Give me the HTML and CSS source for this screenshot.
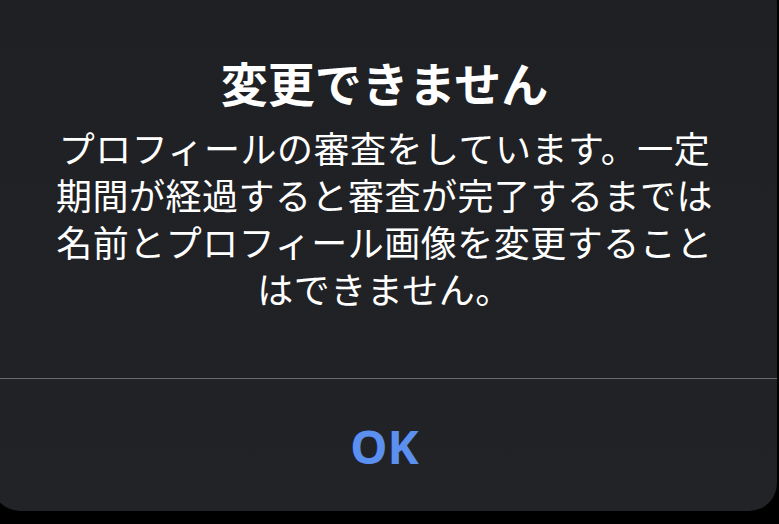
FILE: index.html
```html
<!DOCTYPE html>
<html lang="ja">
<head>
    <meta charset="UTF-8">
    <meta name="viewport" content="width=device-width, initial-scale=1.0">
    <title>変更できません</title>
    <link rel="stylesheet" href="styles.css">
</head>
<body>
    <div class="alert">
        <div class="alert-content">
            <h2 class="alert-title">変更できません</h2>
            <p class="alert-message">
                プロフィールの審査をしています。一定<br>
                期間が経過すると審査が完了するまでは<br>
                名前とプロフィール画像を変更すること<br>
                はできません。
            </p>
        </div>
        <button class="alert-button" type="button">OK</button>
    </div>
</body>
</html>
```

FILE: styles.css
```css
body {
    margin: 0;
    background-color: #000;
    font-family: "Noto Sans CJK JP", "Noto Sans", sans-serif;
    overflow: hidden;
}
.alert {
    width: 785px;
    margin: -24px 0 0 -8px;
    background: linear-gradient(#1e2024, #212326);
    border-radius: 28px;
    overflow: hidden;
}
.alert-content {
    padding: 78px 0 66px;
    text-align: center;
    color: #fff;
}
.alert-title {
    margin: 0;
    font-size: 47px;
    font-weight: 700;
    line-height: 56px;
}
.alert-message {
    margin: 14px 0 0;
    font-size: 36px;
    font-weight: 400;
    line-height: 47px;
    letter-spacing: 0.5px;
}
.alert-button {
    display: flex;
    align-items: center;
    justify-content: center;
    width: 100%;
    height: 133px;
    padding: 2px 0 0;
    border: none;
    border-top: 1px solid #6b6b6e;
    background: transparent;
    color: #5b8ff0;
    font-family: "Noto Sans", "Liberation Sans", sans-serif;
    font-size: 47px;
    font-weight: 700;
    cursor: pointer;
}
```
